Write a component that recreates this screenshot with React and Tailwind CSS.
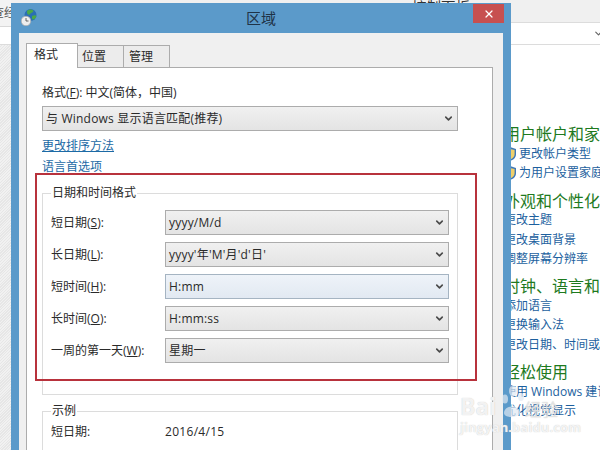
import { ChevronDown, X } from "lucide-react";

const font = { fontFamily: '"Open Sans", "Noto Sans CJK SC", sans-serif' };

const rows = [
  { label: "短日期(", key: "S", value: "yyyy/M/d" },
  { label: "长日期(", key: "L", value: "yyyy'年'M'月'd'日'" },
  { label: "短时间(", key: "H", value: "H:mm", active: true },
  { label: "长时间(", key: "O", value: "H:mm:ss" },
  { label: "一周的第一天(", key: "W", value: "星期一" },
];

const sections = [
  {
    title: "用户帐户和家庭安全",
    mt: "mt-0",
    links: ["更改帐户类型", "为用户设置家庭安全"],
    shield: true,
  },
  {
    title: "外观和个性化",
    mt: "mt-[9px]",
    links: ["更改主题", "更改桌面背景", "调整屏幕分辨率"],
  },
  {
    title: "时钟、语言和区域",
    mt: "mt-[9px]",
    links: ["添加语言", "更换输入法", "更改日期、时间或数字格式"],
  },
  {
    title: "轻松使用",
    mt: "mt-[9px]",
    links: ["使用 Windows 建议的设置", "优化视觉显示"],
  },
];

function Dropdown({ value, active, className }) {
  return (
    <div
      className={`flex h-[25px] items-center justify-between border pl-[3px] pr-[3px] text-[12px] tracking-[0.2px] text-[#2a2a2a] ${
        active
          ? "border-[#a5b4c2] bg-gradient-to-b from-[#eef3f9] to-[#e2e9f2]"
          : "border-[#acacac] bg-gradient-to-b from-[#f0f0f0] to-[#e4e4e4]"
      } ${className}`}
    >
      <span className="whitespace-nowrap">{value}</span>
      <ChevronDown size={11} strokeWidth={3.5} className="text-[#4a4a4a]" />
    </div>
  );
}

function Shield() {
  return (
    <svg width="12" height="14" viewBox="0 0 12 14" className="shrink-0">
      <path d="M6 0 L12 2 V7 C12 11 9 13 6 14 C3 13 0 11 0 7 V2 Z" fill="#3f78b8" />
      <path d="M6 2 L10.6 3 V7 C10.6 10 8.5 11.6 6 12.5 Z" fill="#efcf6a" />
    </svg>
  );
}

function WindowIcon() {
  return (
    <svg width="16" height="17" viewBox="0 0 16 17">
      <circle cx="9.5" cy="6" r="6" fill="#2a6fb5" />
      <path d="M6 2 C8 0 11 0 12.5 2 C12 4 9.5 3.5 8.5 5.5 C7 6.5 5.5 4 6 2 Z" fill="#4aa84a" />
      <path d="M11 7 C13 6 15 6 15.5 7 C14.5 10 12.5 11 11 10 Z" fill="#4aa84a" />
      <circle cx="5" cy="12" r="4.8" fill="#eeeeee" stroke="#a8a8a8" strokeWidth="0.7" />
      <path d="M5 9 V12 H7.5" fill="none" stroke="#555" strokeWidth="0.9" />
    </svg>
  );
}

function ControlPanel() {
  return (
    <div className="flex h-full flex-col bg-white">
      <div className="flex h-[15px] items-end justify-center overflow-hidden bg-[#f0f0f0] pl-[282px]">
        <span className="text-[14.5px] leading-[15px] text-[#333]">控制面板</span>
      </div>
      <div className="flex h-[7px] bg-[#f0f0f0]"></div>
      <div className="flex h-[23px] items-center justify-end border-y border-[#dcdcdc] bg-white">
        <ChevronDown size={11} strokeWidth={2.5} className="mr-[-4px] text-[#666]" />
      </div>
      <div className="flex flex-1">
        <div className="relative w-[11px] bg-[repeating-linear-gradient(135deg,#f1f1f1_0,#f1f1f1_1px,#e6e6e6_1px,#e6e6e6_2px)]">
          <div className="absolute left-0 top-[-45px] flex h-[27px] w-[11px] items-center overflow-hidden border-b border-[#d8d8d8] bg-[#f3f3f3] text-[12px] text-[#555]">
            <span className="ml-[-8px] whitespace-nowrap">查经</span>
          </div>
        </div>
        <div className="flex flex-1 justify-end overflow-hidden">
          <div className="w-[96px] shrink-0 pt-[80px]">
            {sections.map((s) => (
              <div key={s.title} className={s.mt}>
                <div className="whitespace-nowrap text-[16px] leading-[19px] text-[#1e7a1e]">{s.title}</div>
                {s.links.map((l) => (
                  <div key={l} className="flex h-[19.3px] items-center gap-[3px] whitespace-nowrap text-[12px] text-[#1c5f9e]">
                    {s.shield && <Shield />}
                    <span>{l}</span>
                  </div>
                ))}
              </div>
            ))}
          </div>
        </div>
      </div>
    </div>
  );
}

function RegionWindow() {
  return (
    <div className="absolute left-[11px] top-[3px] flex h-[460px] w-[500px] flex-col border-x-[8px] border-[#5b9aca] bg-[#5b9aca]">
      <div className="relative flex h-[30px] shrink-0 items-center justify-center">
        <div className="absolute left-[2px] top-[6px]">
          <WindowIcon />
        </div>
        <span className="text-[15px] text-[#1f3347]">区域</span>
        <div className="absolute right-[-1px] top-[1px] flex h-[19px] w-[31px] items-center justify-center bg-[#c75050]">
          <X size={12} strokeWidth={2.5} className="text-white" />
        </div>
      </div>

      <div className="flex flex-1 flex-col bg-[#f0f0f0] pl-[7px] pr-[10px] pt-[10px]">
        <div className="z-10 mb-[-1px] flex items-end text-[12px] text-[#2a2a2a]">
          <div className="flex h-[25px] w-[52px] items-center border border-b-0 border-[#acacac] bg-white pb-[2px] pl-[7px]">格式</div>
          <div className="flex h-[23px] w-[46px] items-center border border-l-0 border-[#acacac] bg-[#ececec] pl-[4px]">位置</div>
          <div className="flex h-[23px] w-[46px] items-center border border-l-0 border-[#acacac] bg-[#ececec] pl-[5px]">管理</div>
        </div>

        <div className="flex-1 border border-[#acacac] bg-white pl-[15px] pr-[34px] pt-[16px] text-[12px] text-[#2a2a2a]">
          <div className="leading-[18px]">
            格式(<u>F</u>): 中文(简体，中国)
          </div>
          <Dropdown value="与 Windows 显示语言匹配(推荐)" className="mt-[4px]" />
          <div className="mt-[6px] leading-[18px] text-[#1c6aa5] underline">更改排序方法</div>
          <div className="mt-[3px] leading-[18px] text-[#1c6aa5]">语言首选项</div>

          <fieldset className="mt-[8px] border border-[#dcdcdc] px-[8px] pb-[31px] pt-[8px]">
            <legend className="px-[1px] leading-[18px]">日期和时间格式</legend>
            <div className="flex flex-col gap-[7px]">
              {rows.map((r) => (
                <div key={r.key} className="flex items-center">
                  <div className="w-[114px] shrink-0 whitespace-nowrap">
                    {r.label}
                    <u>{r.key}</u>):
                  </div>
                  <Dropdown value={r.value} active={r.active} className="flex-1" />
                </div>
              ))}
            </div>
          </fieldset>

          <fieldset className="mt-[7px] border border-[#dcdcdc] px-[8px] pb-[20px] pt-[3px]">
            <legend className="px-[1px] leading-[18px]">示例</legend>
            <div className="flex items-center leading-[18px]">
              <div className="w-[114px] shrink-0">短日期:</div>
              <div className="tracking-[0.3px]">2016/4/15</div>
            </div>
          </fieldset>
        </div>
      </div>
    </div>
  );
}

function Watermark() {
  return (
    <div className="pointer-events-none absolute left-[460px] top-[384px] w-[116px] leading-none text-white/80 [text-shadow:0_0_1px_#bdbdbd]">
      <div className="flex h-[34px] items-end text-[23px] font-bold">
        <span>Bai</span>
        <svg width="30" height="34" viewBox="0 0 30 34" className="mx-[-1px] shrink-0">
          <g fill="#dfe8f2" fillOpacity="0.7">
            <ellipse cx="10" cy="15" rx="3" ry="4.5" />
            <ellipse cx="18" cy="7" rx="4" ry="5.5" />
            <ellipse cx="26" cy="13" rx="3" ry="4" />
            <path d="M9 29 C9 21 23 20 25 28 C26 34 9 35 9 29 Z" />
          </g>
        </svg>
        <span className="text-[17px] font-normal text-white/50">经验</span>
      </div>
      <div className="mt-[3px] text-[13px] font-bold tracking-[0.1px]">jingyan.baidu.com</div>
    </div>
  );
}

export default function App() {
  return (
    <div className="relative h-[450px] w-[600px] overflow-hidden" style={font}>
      <ControlPanel />
      <RegionWindow />
      <div className="pointer-events-none absolute left-[35px] top-[173px] h-[208px] w-[442px] border-[2px] border-[#b8323c]"></div>
      <Watermark />
    </div>
  );
}
